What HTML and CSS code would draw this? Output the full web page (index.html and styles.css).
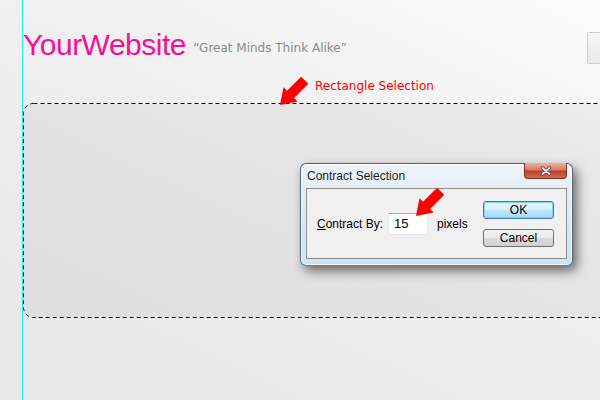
FILE: index.html
```html
<!DOCTYPE html>
<html lang="en">
<head>
    <meta charset="UTF-8">
    <title>Contract Selection</title>
    <link rel="stylesheet" href="styles.css">
</head>
<body>

<div class="stage">
    <div class="guide"></div>

    <header class="brand">
        <span class="logo">YourWebsite</span>
        <span class="tagline">&ldquo;Great Minds Think Alike&rdquo;</span>
    </header>

    <div class="corner-tab"></div>

    <!-- 选区(虚线圆角矩形) -->
    <svg class="selection" width="600" height="216" viewBox="0 0 600 216">
        <rect class="sel-fill" x="0.5" y="0.5" width="640" height="214" rx="10"></rect>
        <rect class="sel-white" x="0.5" y="0.5" width="640" height="214" rx="10"></rect>
        <rect class="sel-ants" x="0.5" y="0.5" width="640" height="214" rx="10"></rect>
    </svg>

    <div class="note">Rectangle Selection</div>
    <svg class="arrow arrow-top" width="45" height="45" viewBox="0 0 45 45">
        <g transform="translate(10 35) rotate(135)">
            <polygon points="0,0 -15,10 -15,5 -35,5 -35,-5 -15,-5 -15,-10"></polygon>
        </g>
    </svg>

    <div class="dialog">
        <div class="titlebar">
            <span class="title">Contract Selection</span>
            <span class="close">
                <svg width="14" height="10" viewBox="0 0 14 10">
                    <path class="x-edge" d="M3.5 2 L10.5 8 M10.5 2 L3.5 8"></path>
                    <path class="x-core" d="M3.5 2 L10.5 8 M10.5 2 L3.5 8"></path>
                </svg>
            </span>
        </div>
        <div class="panel">
            <div class="field">
                <span class="label"><u>C</u>ontract By:</span>
                <span class="input">15</span>
                <span class="unit">pixels</span>
            </div>
            <div class="actions">
                <span class="btn btn-primary">OK</span>
                <span class="btn">Cancel</span>
            </div>
        </div>
    </div>

    <svg class="arrow arrow-input" width="45" height="45" viewBox="0 0 45 45">
        <g transform="translate(11 33) rotate(135)">
            <polygon points="0,0 -15,10 -15,5 -35,5 -35,-5 -15,-5 -15,-10"></polygon>
        </g>
    </svg>
</div>

</body>
</html>
```

FILE: styles.css
```css
* {
    margin: 0;
    padding: 0;
}

body {
    width: 600px;
    height: 400px;
    overflow: hidden;
    font-family: "Liberation Sans", Arial, sans-serif;
}

.stage {
    position: relative;
    height: 400px;
    background: linear-gradient(205deg, #fcfcfc 0%, #f1f1f1 35%, #ebebeb 70%, #e7e7e7 100%);
}

/* 参考线 */
.guide {
    position: absolute;
    left: 22px;
    top: 0;
    width: 1px;
    height: 400px;
    background-color: #19f0f0;
}

.brand {
    padding: 27px 0 0 23px;
    font: 30px/36px "Liberation Sans", Arial, sans-serif;
    white-space: nowrap;
}

.logo {
    color: #f70f93;
    letter-spacing: -0.5px;
}

.tagline {
    margin-left: -1px;
    vertical-align: 3px;
    font: 12px "DejaVu Sans", Verdana, sans-serif;
    color: #8a8a8a;
}

.corner-tab {
    position: absolute;
    left: 587px;
    top: 32px;
    width: 30px;
    height: 30px;
    border: 1px solid #cfcfcf;
    border-radius: 2px;
    background: linear-gradient(#f7f7f7, #e9e9e9);
}

.selection {
    position: absolute;
    left: 23px;
    top: 103px;
}

.sel-fill {
    fill: rgba(0, 0, 0, 0.045);
    stroke: none;
}

.sel-white {
    fill: none;
    stroke: #ffffff;
}

.sel-ants {
    fill: none;
    stroke: #000000;
    stroke-dasharray: 4 3;
}

.note {
    position: absolute;
    left: 315px;
    top: 79px;
    font: 12px/14px "DejaVu Sans", Verdana, sans-serif;
    color: #ff0000;
}

.arrow {
    position: absolute;
}

.arrow polygon {
    fill: #ff0000;
}

.arrow-top {
    left: 270px;
    top: 70px;
}

.arrow-input {
    left: 405px;
    top: 183px;
}

/* 对话框 */
.dialog {
    position: absolute;
    left: 300px;
    top: 163px;
    width: 273px;
    height: 103px;
    box-sizing: border-box;
    display: flex;
    flex-direction: column;
    border: 1px solid #59656f;
    border-bottom-color: #2f8fcf;
    border-radius: 6px;
    background: linear-gradient(#eef3f8 0%, #dfe9f2 45%, #cfe2f2 100%);
    box-shadow: inset 0 0 0 1px rgba(255, 255, 255, 0.7), 4px 5px 11px rgba(0, 0, 0, 0.55);
    font-size: 12px;
    color: #000;
}

.titlebar {
    display: flex;
    align-items: flex-start;
    height: 24px;
    padding-left: 6px;
}

.title {
    padding-top: 5px;
    line-height: 14px;
    color: #1e1e1e;
}

.close {
    display: flex;
    justify-content: center;
    align-items: center;
    width: 43px;
    height: 16px;
    margin: -1px 5px 0 auto;
    box-sizing: border-box;
    border: 1px solid #7d2f25;
    border-top: none;
    border-radius: 0 0 4px 4px;
    background: linear-gradient(#e6b2a6 0%, #d77a69 45%, #c2402f 55%, #cf6a4c 100%);
}

.close path {
    fill: none;
    stroke-linecap: round;
}

.close .x-edge {
    stroke: #6b3a33;
    stroke-width: 3.4;
}

.close .x-core {
    stroke: #f4f4f4;
    stroke-width: 1.8;
}

.panel {
    display: flex;
    align-items: center;
    height: 71px;
    margin: 0 5px;
    padding: 0 12px 0 10px;
    box-sizing: border-box;
    border: 1px solid #8e8f8f;
    background-color: #f0f0f0;
}

.field {
    display: flex;
    align-items: center;
}

.input {
    width: 40px;
    height: 22px;
    margin: 0 9px 0 5px;
    padding-left: 5px;
    box-sizing: border-box;
    border: 1px solid #e3e9ef;
    border-top-color: #abadb3;
    background-color: #fff;
    font-size: 13px;
    line-height: 20px;
}

.actions {
    display: flex;
    flex-direction: column;
    gap: 10px;
    margin-left: auto;
}

.btn {
    width: 71px;
    height: 18px;
    box-sizing: border-box;
    border: 1px solid #707070;
    border-radius: 3px;
    background: linear-gradient(#f2f2f2 0%, #ebebeb 48%, #dddddd 52%, #cfcfcf 100%);
    text-align: center;
    line-height: 16px;
}

.btn-primary {
    border-color: #3c7fb1;
    background: linear-gradient(#eaf6fd 0%, #d9f0fc 48%, #bee6fd 52%, #a7d9f5 100%);
    box-shadow: inset 0 0 0 1px #78d2f8;
}
```
